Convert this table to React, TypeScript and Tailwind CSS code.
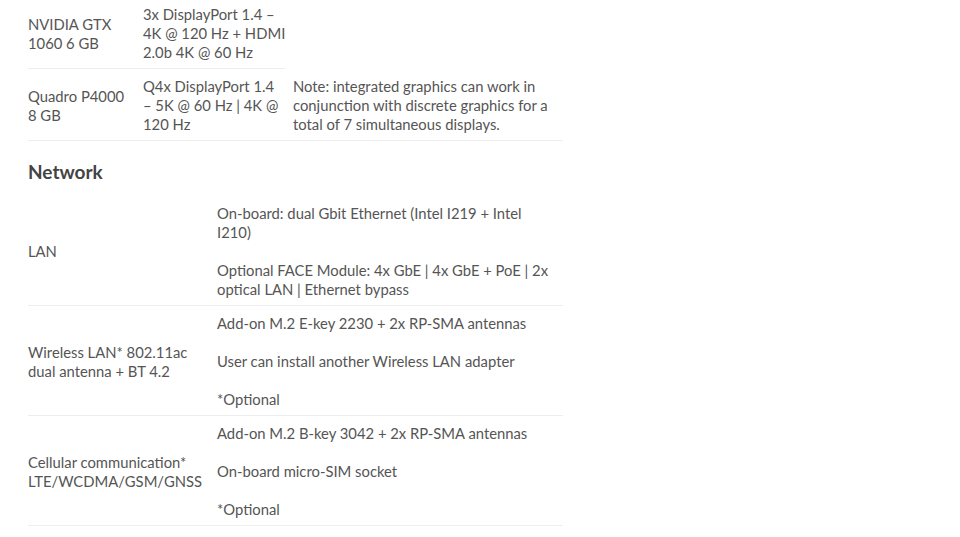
const font = { fontFamily: 'Lato, "Open Sans", sans-serif' };

interface SpecRow {
  label: string[];
  values: string[];
}

const network: SpecRow[] = [
  {
    label: ['LAN'],
    values: [
      'On-board: dual Gbit Ethernet (Intel I219 + Intel I210)',
      'Optional FACE Module: 4x GbE | 4x GbE + PoE | 2x optical LAN | Ethernet bypass',
    ],
  },
  {
    label: ['Wireless LAN* 802.11ac', 'dual antenna + BT 4.2'],
    values: [
      'Add-on M.2 E-key 2230 + 2x RP-SMA antennas',
      'User can install another Wireless LAN adapter',
      '*Optional',
    ],
  },
  {
    label: ['Cellular communication*', 'LTE/WCDMA/GSM/GNSS'],
    values: [
      'Add-on M.2 B-key 3042 + 2x RP-SMA antennas',
      'On-board micro-SIM socket',
      '*Optional',
    ],
  },
];

export default function App() {
  return (
    <div
      className="w-[960px] h-[537px] overflow-hidden bg-white text-[14.8px] leading-[19px] text-[#555]"
      style={font}
    >
      <div className="ml-[28px] w-[535px]">
        {/* Graphics table (continued) */}
        <div className="-mt-[4px] border-t border-[#eee]">
          <div className="flex">
            <div className="w-[115px] pr-2 flex items-center pt-[8px] pb-[6px]">
              NVIDIA GTX 1060 6 GB
            </div>
            <div className="w-[150px] pt-[8px] pb-[6px]">
              3x DisplayPort 1.4 – 4K @ 120 Hz + HDMI 2.0b 4K @ 60 Hz
            </div>
          </div>
          <div className="w-[257px] h-px bg-[#eee]" />
          <div className="flex border-b border-[#eee]">
            <div className="w-[115px] pr-2 flex items-center pt-[8px] pb-[6px]">
              Quadro P4000 8 GB
            </div>
            <div className="w-[150px] pr-2 pt-[8px] pb-[6px]">
              Q4x DisplayPort 1.4 – 5K @ 60 Hz | 4K @ 120 Hz
            </div>
            <div className="flex-1 flex items-center pr-2 pt-[8px] pb-[6px]">
              Note: integrated graphics can work in conjunction with discrete graphics for a total of 7 simultaneous displays.
            </div>
          </div>
        </div>

        <h3 className="mt-[19px] mb-[12px] text-[19px] leading-[24px] font-bold text-[#444]">Network</h3>

        <div>
          {network.map((row) => (
            <div key={row.label[0]} className="flex border-b border-[#eee]">
              <div className="w-[189px] pr-2 flex flex-col justify-center pt-[8px] pb-[6px]">
                {row.label.map((l) => (
                  <div key={l}>{l}</div>
                ))}
              </div>
              <div className="flex-1 pr-2 pt-[8px] pb-[6px] flex flex-col gap-[19px]">
                {row.values.map((v) => (
                  <p key={v}>{v}</p>
                ))}
              </div>
            </div>
          ))}
        </div>
      </div>
    </div>
  );
}
